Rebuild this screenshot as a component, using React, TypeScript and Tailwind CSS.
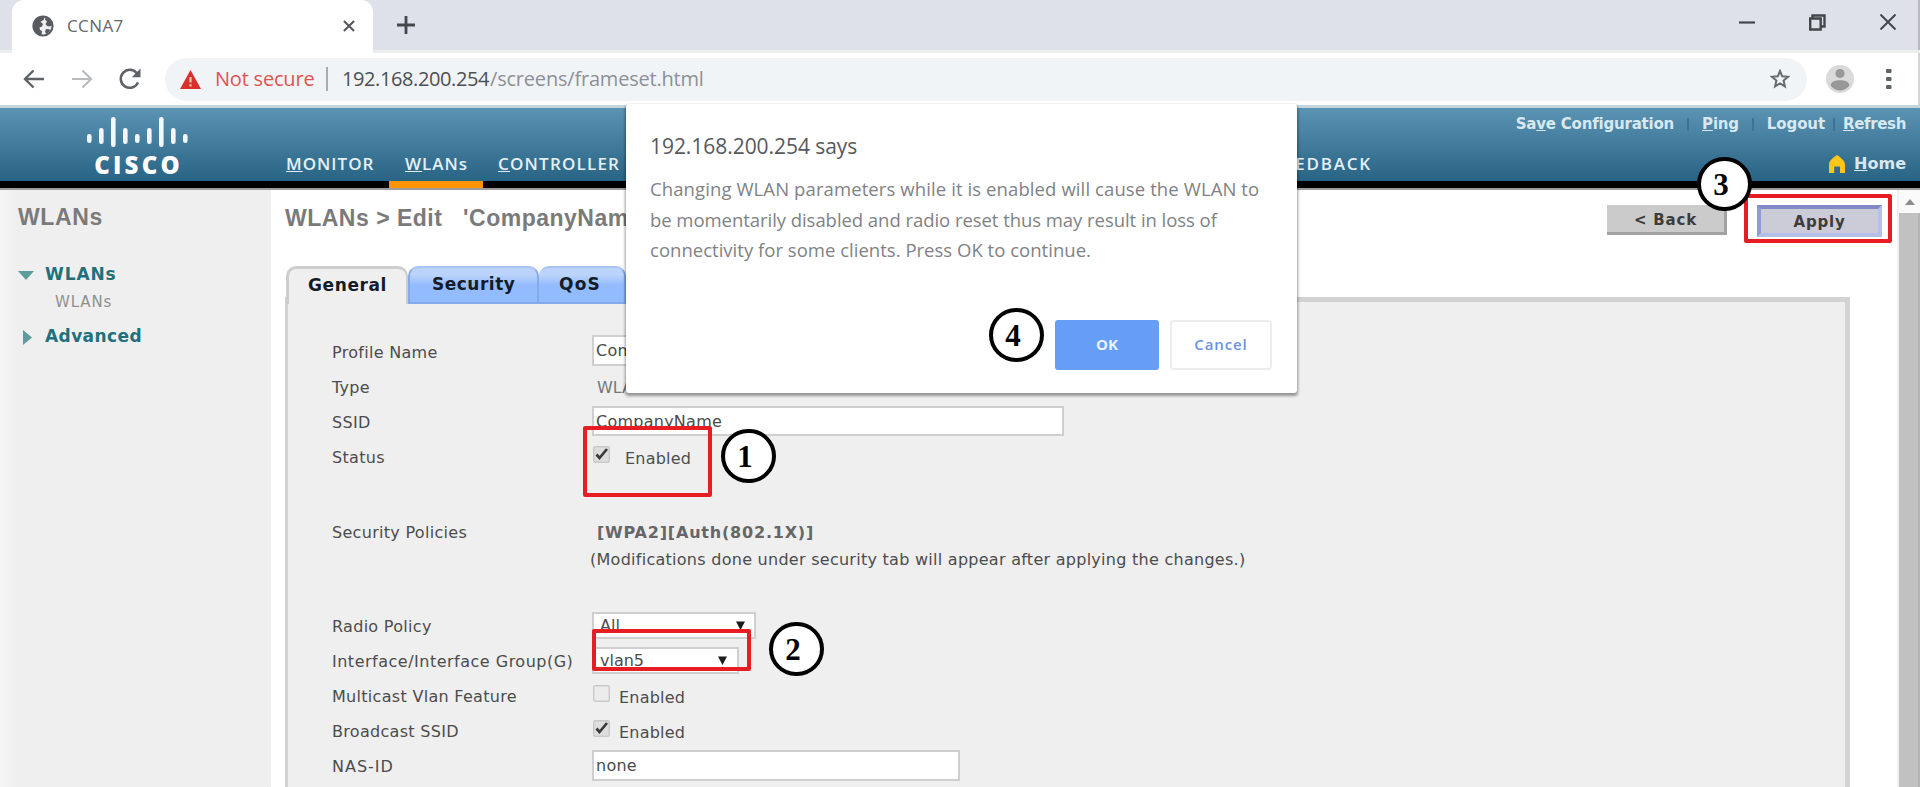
import type { ReactNode } from "react";

const verdana = "font-['DejaVu_Sans',sans-serif]";

function Globe() {
  return (
    <svg width="22" height="22" viewBox="0 0 22 22">
      <circle cx="11" cy="11" r="9.600" fill="#eef0f2" stroke="#575b60" strokeWidth="2" />
      <path d="M3 5.500L9 1.500l3.500.8-.8 2.700-3.200 1.700 2.500 2.300-1 2.500-2.500 1 .5 2.500 2 1-.5 4.500C5 19.500 2 16 1.800 11z" fill="#575b60" />
      <path d="M13.500 2.500l4.500 2.500 2.300 5-2.300 1.500-3-.5-1.500-2 1.500-2.500-2-1.800zM14 14l3.500.3.500 1.700-3.500 3.200-1.500-2.500z" fill="#575b60" />
    </svg>
  );
}

function CiscoBars() {
  const bars = [
    [0, 17, 9],
    [12, 11, 16],
    [24, 0, 30],
    [36, 11, 16],
    [48, 17, 9],
    [60, 11, 16],
    [72, 0, 30],
    [84, 11, 16],
    [96, 17, 9],
  ];
  return (
    <svg width="101" height="31" viewBox="0 0 101 31" fill="#f3f8fb">
      {bars.map(([x, y, h]) => (
        <rect key={x} x={x} y={y} width="4.600" height={h} rx="2.200" />
      ))}
    </svg>
  );
}

function Row({ label, children, labelClass = "tracking-[0.3px]" }: { label: string; children: ReactNode; labelClass?: string }) {
  return (
    <div className="flex h-[35px]">
      <div className={`w-[260px] shrink-0 whitespace-nowrap leading-[35px] ${labelClass}`}>{label}</div>
      {children}
    </div>
  );
}

function Check({ on = false }: { on?: boolean }) {
  return (
    <svg width="17" height="17" viewBox="0 0 17 17" className="shrink-0">
      <rect x=".7" y=".7" width="15.600" height="15.600" rx="1.500" fill={on ? "#dedede" : "#ececec"} stroke="#c9c9c9" strokeWidth="1.400" />
      {on && <path d="M3.500 8.500l3 3.500L14 3" fill="none" stroke="#3a3a3a" strokeWidth="2.700" />}
    </svg>
  );
}

function Caret() {
  return (
    <svg width="9" height="9" viewBox="0 0 9 9">
      <path d="M0 .5h9L4.500 9z" fill="#1c1c1c" />
    </svg>
  );
}

function Step({ n, className }: { n: string; className: string }) {
  return (
    <div
      className={`absolute flex h-[54px] w-[55px] items-center justify-center rounded-full border-[4.5px] border-black bg-white pr-[7px] font-['Liberation_Serif',serif] text-[31px] font-bold leading-none text-black ${className}`}
    >
      {n}
    </div>
  );
}

const inputClass = "border-2 border-[#cfcfcf] bg-white px-[2px] tracking-[0.25px] text-[#4a4a4a] outline-none";
const navLink = "h-full whitespace-nowrap pt-[44px] leading-[24px]";

export default function App() {
  return (
    <div className="relative flex h-[787px] w-[1920px] flex-col overflow-hidden bg-white">
      {/* Tab strip */}
      <div className="flex h-[53px] shrink-0 items-stretch border-b-[3px] border-[#eceff0] bg-[#dee1e9] pl-[12px]">
        <div className="-mb-[3px] flex w-[361px] items-center rounded-t-[12px] bg-white pb-[2px] pl-[20px] pr-[18px]">
          <Globe />
          <span className="ml-[13px] flex-1 font-['Open_Sans',sans-serif] text-[17px] leading-[50px] tracking-[0.4px] text-[#64676b]">CCNA7</span>
          <svg width="12" height="12" viewBox="0 0 13 13" stroke="#54575b" strokeWidth="2.200">
            <path d="M1 1l11 11M12 1L1 12" />
          </svg>
        </div>
        <div className="flex flex-1 items-center pl-[24px]">
          <svg width="18" height="18" viewBox="0 0 18 18" stroke="#44474b" strokeWidth="2.800">
            <path d="M9 0v18M0 9h18" />
          </svg>
        </div>
        <div className="flex items-center gap-[54px] border-r-2 border-[#b8babd] pb-[6px] pr-[22px]">
          <svg width="16" height="16" viewBox="0 0 16 16" stroke="#43464a" strokeWidth="2.200">
            <path d="M0 8.500h16" />
          </svg>
          <svg width="17" height="17" viewBox="0 0 17 17" fill="none" stroke="#43464a" strokeWidth="2.400">
            <path d="M1.200 4.500h10.500v11H1.200z" />
            <path d="M3.500 4V1.500h12v11h-3.500" />
          </svg>
          <svg width="16" height="16" viewBox="0 0 16 16" stroke="#43464a" strokeWidth="2">
            <path d="M.5 .5l15 15M15.500 .5l-15 15" />
          </svg>
        </div>
      </div>

      {/* Address bar */}
      <div className="flex h-[52px] shrink-0 items-center border-r-2 border-[#d5d5d5] bg-white pl-[23px] font-['Open_Sans',sans-serif] text-[20px]">
        <svg width="21" height="20" viewBox="0 0 21 20" fill="none" stroke="#5f6368" strokeWidth="2.400">
          <path d="M21 10H2.500M10.500 1.500L2 10l8.500 8.500" />
        </svg>
        <svg width="21" height="20" viewBox="0 0 21 20" fill="none" stroke="#b9bcbf" strokeWidth="2.200" className="ml-[28px]">
          <path d="M0 10h18.500M10.500 1.500L19 10l-8.500 8.500" />
        </svg>
        <svg width="24" height="24" viewBox="0 0 24 24" fill="none" stroke="#5f6368" strokeWidth="2.500" className="ml-[25px]">
          <path d="M20 15.500A9 9 0 1 1 18.800 6.200" />
          <path d="M22.500 1.500v8.700h-8.700z" fill="#5f6368" stroke="none" />
        </svg>
        <div className="ml-[23px] flex h-[43px] w-[1642px] items-center rounded-full bg-[#f1f4f7] pl-[15px] pr-[17px]">
          <svg width="21" height="19" viewBox="0 0 21 19">
            <path d="M10.500 0L21 19H0z" fill="#d9302c" />
            <path d="M10.500 7v5.500M10.500 14.200v2.300" stroke="#f1c9a5" strokeWidth="2.200" />
          </svg>
          <span className="ml-[14px] w-[100px] whitespace-nowrap tracking-[-0.2px] text-[#de5350]">Not secure</span>
          <div className="ml-[11px] h-[24px] w-[2px] bg-[#a9acaf]" />
          <span className="ml-[14px] w-[148px] whitespace-nowrap tracking-[-0.4px] text-[#4c4f53]">192.168.200.254</span>
          <span className="flex-1 tracking-[-0.2px] text-[#8d9094]">/screens/frameset.html</span>
          <svg width="20" height="20" viewBox="0 0 20 20" fill="none" stroke="#66696d" strokeWidth="2">
            <path d="M10 2l2.200 5.300 5.800.5-4.400 3.800 1.300 5.700L10 14.300l-4.900 3 1.300-5.700L2 7.800l5.800-.5z" />
          </svg>
        </div>
        <svg width="28" height="28" viewBox="0 0 28 28" className="ml-[19px]">
          <circle cx="14" cy="14" r="14" fill="#dadada" />
          <circle cx="14" cy="8.500" r="4.600" fill="#989898" />
          <path d="M4.500 20c1-4 5-4.800 9.500-4.800s8.500.8 9.500 4.800c-2 3.600-5.500 5.500-9.500 5.500S6.500 23.600 4.500 20z" fill="#989898" />
        </svg>
        <svg width="6" height="22" viewBox="0 0 6 22" fill="#5f6368" className="ml-[32px]">
          <rect y="1" width="5.500" height="4" rx="1" />
          <rect y="9" width="5.500" height="4" rx="1" />
          <rect y="17" width="5.500" height="4" rx="1" />
        </svg>
      </div>

      {/* Controller header */}
      <div className="flex h-[85px] shrink-0 border-b-2 border-t-[3px] border-b-[#9d9d9d] border-t-[#c5d5de] bg-black pb-[7px]">
        <div className="flex h-[73px] w-full bg-linear-to-b from-[#5b93b3] to-[#286485] text-white">
          <div className="flex w-[286px] flex-col items-center pr-[12px] pt-[9px]">
            <CiscoBars />
            <div className="mt-[2px] pl-[3px] font-['Open_Sans',sans-serif] text-[24px] font-extrabold leading-[29px] tracking-[3.2px]">CISCO</div>
          </div>
          <div className="flex flex-1 font-['Open_Sans',sans-serif] text-[17px] font-semibold text-[#e4eff5]">
            <div className={`${navLink} w-[103px] tracking-[1px]`}>
              <u>M</u>ONITOR
            </div>
            <div className="h-[80px] w-[94px] border-b-[7px] border-[#ff9400] pl-[16px] pt-[44px] leading-[24px] tracking-[1px]">
              <u>W</u>LANs
            </div>
            <div className={`${navLink} w-[790px] pl-[15px] tracking-[1.2px]`}>
              <u>C</u>ONTROLLER
            </div>
            <div className={`${navLink} tracking-[1.8px]`}>
              <u>F</u>EEDBACK
            </div>
          </div>
          <div className={`flex w-[410px] flex-col items-end pr-[14px] pt-[6px] text-[15px] font-bold text-[#d8e8f0] ${verdana}`}>
            <div className="flex whitespace-nowrap leading-[20px] tracking-[-0.2px]">
              <span>
                Sa<u>v</u>e Configuration
              </span>
              <span className="mx-[13px] mt-[4px] h-[13px] w-[2px] bg-[#3a7596]" />
              <span>
                <u>P</u>ing
              </span>
              <span className="mx-[13px] mt-[4px] h-[13px] w-[2px] bg-[#3a7596]" />
              <span className="tracking-[-0.1px]">Logout</span>
              <span className="mx-[8px] mt-[4px] h-[13px] w-[2px] bg-[#3a7596]" />
              <span className="tracking-[-0.35px]">
                <u>R</u>efresh
              </span>
            </div>
            <div className="mt-[18px] flex items-center leading-[24px]">
              <svg width="16" height="19" viewBox="0 0 16 19" className="mr-[9px]">
                <path d="M8 0c4 2.500 8 6 8 9.500V18h-5v-6.500H5.200V18H0V9.500C0 6 4 2.500 8 0z" fill="#ffc61a" />
              </svg>
              <span className="text-[16px]">
                <u>H</u>ome
              </span>
            </div>
          </div>
        </div>
      </div>

      <div className="flex min-h-0 flex-1">
        {/* Sidebar */}
        <div className={`w-[271px] shrink-0 bg-[#efefef] bg-linear-to-r from-[#f6f6f6] to-[#efefef] to-[6%] pl-[18px] ${verdana}`}>
          <div className="pt-[12px] font-['Liberation_Sans',Arial,sans-serif] text-[23px] font-bold leading-[30px] tracking-[0.6px] text-[#7a7a7a]">WLANs</div>
          <div className="mt-[31px] flex h-[24px] items-center text-[17px] font-bold tracking-[0.9px] text-[#22707c]">
            <svg width="16" height="9" viewBox="0 0 16 9" className="mr-[11px]">
              <path d="M0 0h16L8 9z" fill="#5c9c9c" />
            </svg>
            WLANs
          </div>
          <div className="pl-[37px] text-[15px] leading-[30px] tracking-[0.9px] text-[#909090]">WLANs</div>
          <div className="mt-[8px] flex h-[24px] items-center text-[17px] font-bold tracking-[0.4px] text-[#22707c]">
            <svg width="9" height="15" viewBox="0 0 9 15" className="ml-[5px] mr-[13px]">
              <path d="M0 0l9 7.500L0 15z" fill="#5c9c9c" />
            </svg>
            Advanced
          </div>
        </div>

        {/* Main pane */}
        <div className="flex min-w-0 flex-1 flex-col pl-[14px]">
          <div className="flex h-[76px] shrink-0 justify-between pr-[15px]">
            <div className="whitespace-pre pt-[13px] font-['Liberation_Sans',Arial,sans-serif] text-[23px] font-bold leading-[30px] tracking-[0.5px] text-[#7a7a7a]">
              {"WLANs > Edit   'CompanyName'"}
            </div>
            <div className={`flex gap-[30px] pt-[15px] text-[15px] font-bold text-[#3c3c3c] ${verdana}`}>
              <button className="h-[30px] w-[120px] border-b-[3px] border-r-[3px] border-[#a2a2a2] bg-[#cbcbcb] pt-[4px] leading-[23px] tracking-[0.8px]">&lt; Back</button>
              <button className="h-[32px] w-[125px] border-4 border-b-[#b3bfe6] border-l-[#8f9bd3] border-r-[#b3c1ec] border-t-[#8189c6] bg-[#cbccd8] pt-[2px] leading-[22px] tracking-[0.8px]">Apply</button>
            </div>
          </div>

          <div className="relative z-10 flex h-[38px] shrink-0 pl-[1px] font-['DejaVu_Sans',sans-serif] text-[17px] font-bold leading-[32px] text-[#141c26]">
            <div className="w-[122px] rounded-t-[10px] border-l-[3px] border-r-2 border-t-[3px] border-[#cdcdcd] bg-[#efefef] pl-[19px] tracking-[0.6px]">General</div>
            <div className="w-[131px] rounded-t-[10px] border-b-2 border-l-2 border-r-2 border-t-2 border-[#84aaea] border-t-[#a9c4f2] bg-linear-to-b from-[#bcd3fb] from-20% to-[#93bcff] to-50% pl-[22px] tracking-[0.5px]">Security</div>
            <div className="w-[87px] rounded-t-[10px] border-b-2 border-r-2 border-t-2 border-[#84aaea] border-t-[#a9c4f2] bg-linear-to-b from-[#bcd3fb] from-20% to-[#93bcff] to-50% pl-[20px] tracking-[1.2px]">QoS</div>
          </div>

          <div className={`-mt-[7px] w-[1565px] flex-1 border-l-[3px] border-r-[5px] border-t-[5px] border-[#d3d3d3] bg-[#efefef] pl-[44px] pt-[33px] text-[16px] text-[#4c4c4c] ${verdana}`}>
            <Row label="Profile Name">
              <input readOnly value="CompanyName" className={`${inputClass} h-[31px] w-[470px]`} />
            </Row>
            <Row label="Type">
              <span className="pl-[5px] leading-[35px] text-[#777]">WLAN</span>
            </Row>
            <Row label="SSID">
              <input readOnly value="CompanyName" className={`${inputClass} mt-px h-[30px] w-[472px]`} />
            </Row>
            <Row label="Status">
              <div className="flex h-[35px] items-start gap-[15px] pl-[1px] pt-[6px] tracking-[0.2px]">
                <Check on />
                <span className="leading-[25px]">Enabled</span>
              </div>
            </Row>
            <div className="mt-[40px]">
              <Row label="Security Policies" labelClass="tracking-[0.3px]">
                <span className="pl-[5px] font-bold leading-[35px] tracking-[0.8px] text-[#666]">[WPA2][Auth(802.1X)]</span>
              </Row>
            </div>
            <div className="mb-[42px] h-[17px] pl-[258px] leading-[19px] tracking-[0.27px]">
              (Modifications done under security tab will appear after applying the changes.)
            </div>
            <Row label="Radio Policy">
              <div className="mt-[3px] flex h-[27px] w-[164px] items-center justify-between border-2 border-[#cfcfcf] bg-white pl-[6px] pr-[9px]">
                All <Caret />
              </div>
            </Row>
            <Row label="Interface/Interface Group(G)" labelClass="tracking-[0.5px]">
              <div className="mt-[3px] flex h-[27px] w-[147px] items-center justify-between border-2 border-[#cfcfcf] bg-white pl-[6px] pr-[10px]">
                vlan5 <Caret />
              </div>
            </Row>
            <Row label="Multicast Vlan Feature">
              <div className="flex items-start gap-[9px] pl-[1px] pt-[6px] tracking-[0.2px]">
                <Check />
                <span className="leading-[26px]">Enabled</span>
              </div>
            </Row>
            <Row label="Broadcast SSID">
              <div className="flex items-start gap-[9px] pl-[1px] pt-[6px] tracking-[0.2px]">
                <Check on />
                <span className="leading-[26px]">Enabled</span>
              </div>
            </Row>
            <Row label="NAS-ID" labelClass="tracking-[1px]">
              <input readOnly value="none" className={`${inputClass} mt-px h-[31px] w-[368px]`} />
            </Row>
          </div>
        </div>

        {/* Scrollbar */}
        <div className="flex w-[23px] shrink-0 flex-col border-l-2 border-[#f0f0f0]">
          <div className="flex h-[23px] items-center justify-center bg-[#fafafa]">
            <svg width="10" height="6" viewBox="0 0 10 6">
              <path d="M5 0l5 6H0z" fill="#8c8c8c" />
            </svg>
          </div>
          <div className="flex-1 border-r-2 border-[#b5b5b5] bg-[#c1c1c1]" />
        </div>
      </div>

      {/* Alert dialog */}
      <div className="absolute left-[626px] top-[104px] z-20 h-[289px] w-[671px] rounded-[3px] bg-white pl-[24px] pr-[25px] pt-[28px] font-['Open_Sans',sans-serif] shadow-[0_2px_3px_1px_rgba(0,0,0,0.38)]">
        <div className="text-[21px] leading-[28px] tracking-[-0.05px] text-[#57595c]">192.168.200.254 says</div>
        <div className="mt-[14px] whitespace-nowrap text-[18.5px] leading-[30.5px] text-[#808285]">
          <div className="tracking-[0.1px]">Changing WLAN parameters while it is enabled will cause the WLAN to</div>
          <div className="tracking-[-0.05px]">be momentarily disabled and radio reset thus may result in loss of</div>
          <div className="tracking-[0.02px]">connectivity for some clients. Press OK to continue.</div>
        </div>
        <div className="mt-[54px] flex justify-end gap-[11px] text-[15px] font-bold">
          <button className="h-[50px] w-[104px] rounded-[3px] bg-[#669df6] text-[#e9f2ff]">OK</button>
          <button className="h-[50px] w-[102px] rounded-[4px] border-2 border-[#ededf0] bg-white font-semibold tracking-[0.9px] text-[#6b92e6]">Cancel</button>
        </div>
      </div>

      {/* Step annotations */}
      <div className="absolute left-[1744px] top-[194px] z-30 h-[49px] w-[148px] rounded-[2px] border-4 border-[#e61e24]" />
      <div className="absolute left-[583px] top-[426px] z-30 h-[71px] w-[129px] rounded-[2px] border-4 border-[#e61e24]" />
      <div className="absolute left-[592px] top-[629px] z-30 h-[42px] w-[159px] rounded-[2px] border-4 border-[#e61e24]" />
      <Step n="1" className="left-[721px] top-[429px] z-30" />
      <Step n="2" className="left-[769px] top-[622px] z-30" />
      <Step n="3" className="left-[1697px] top-[157px] z-30" />
      <Step n="4" className="left-[989px] top-[308px] z-30" />
    </div>
  );
}
